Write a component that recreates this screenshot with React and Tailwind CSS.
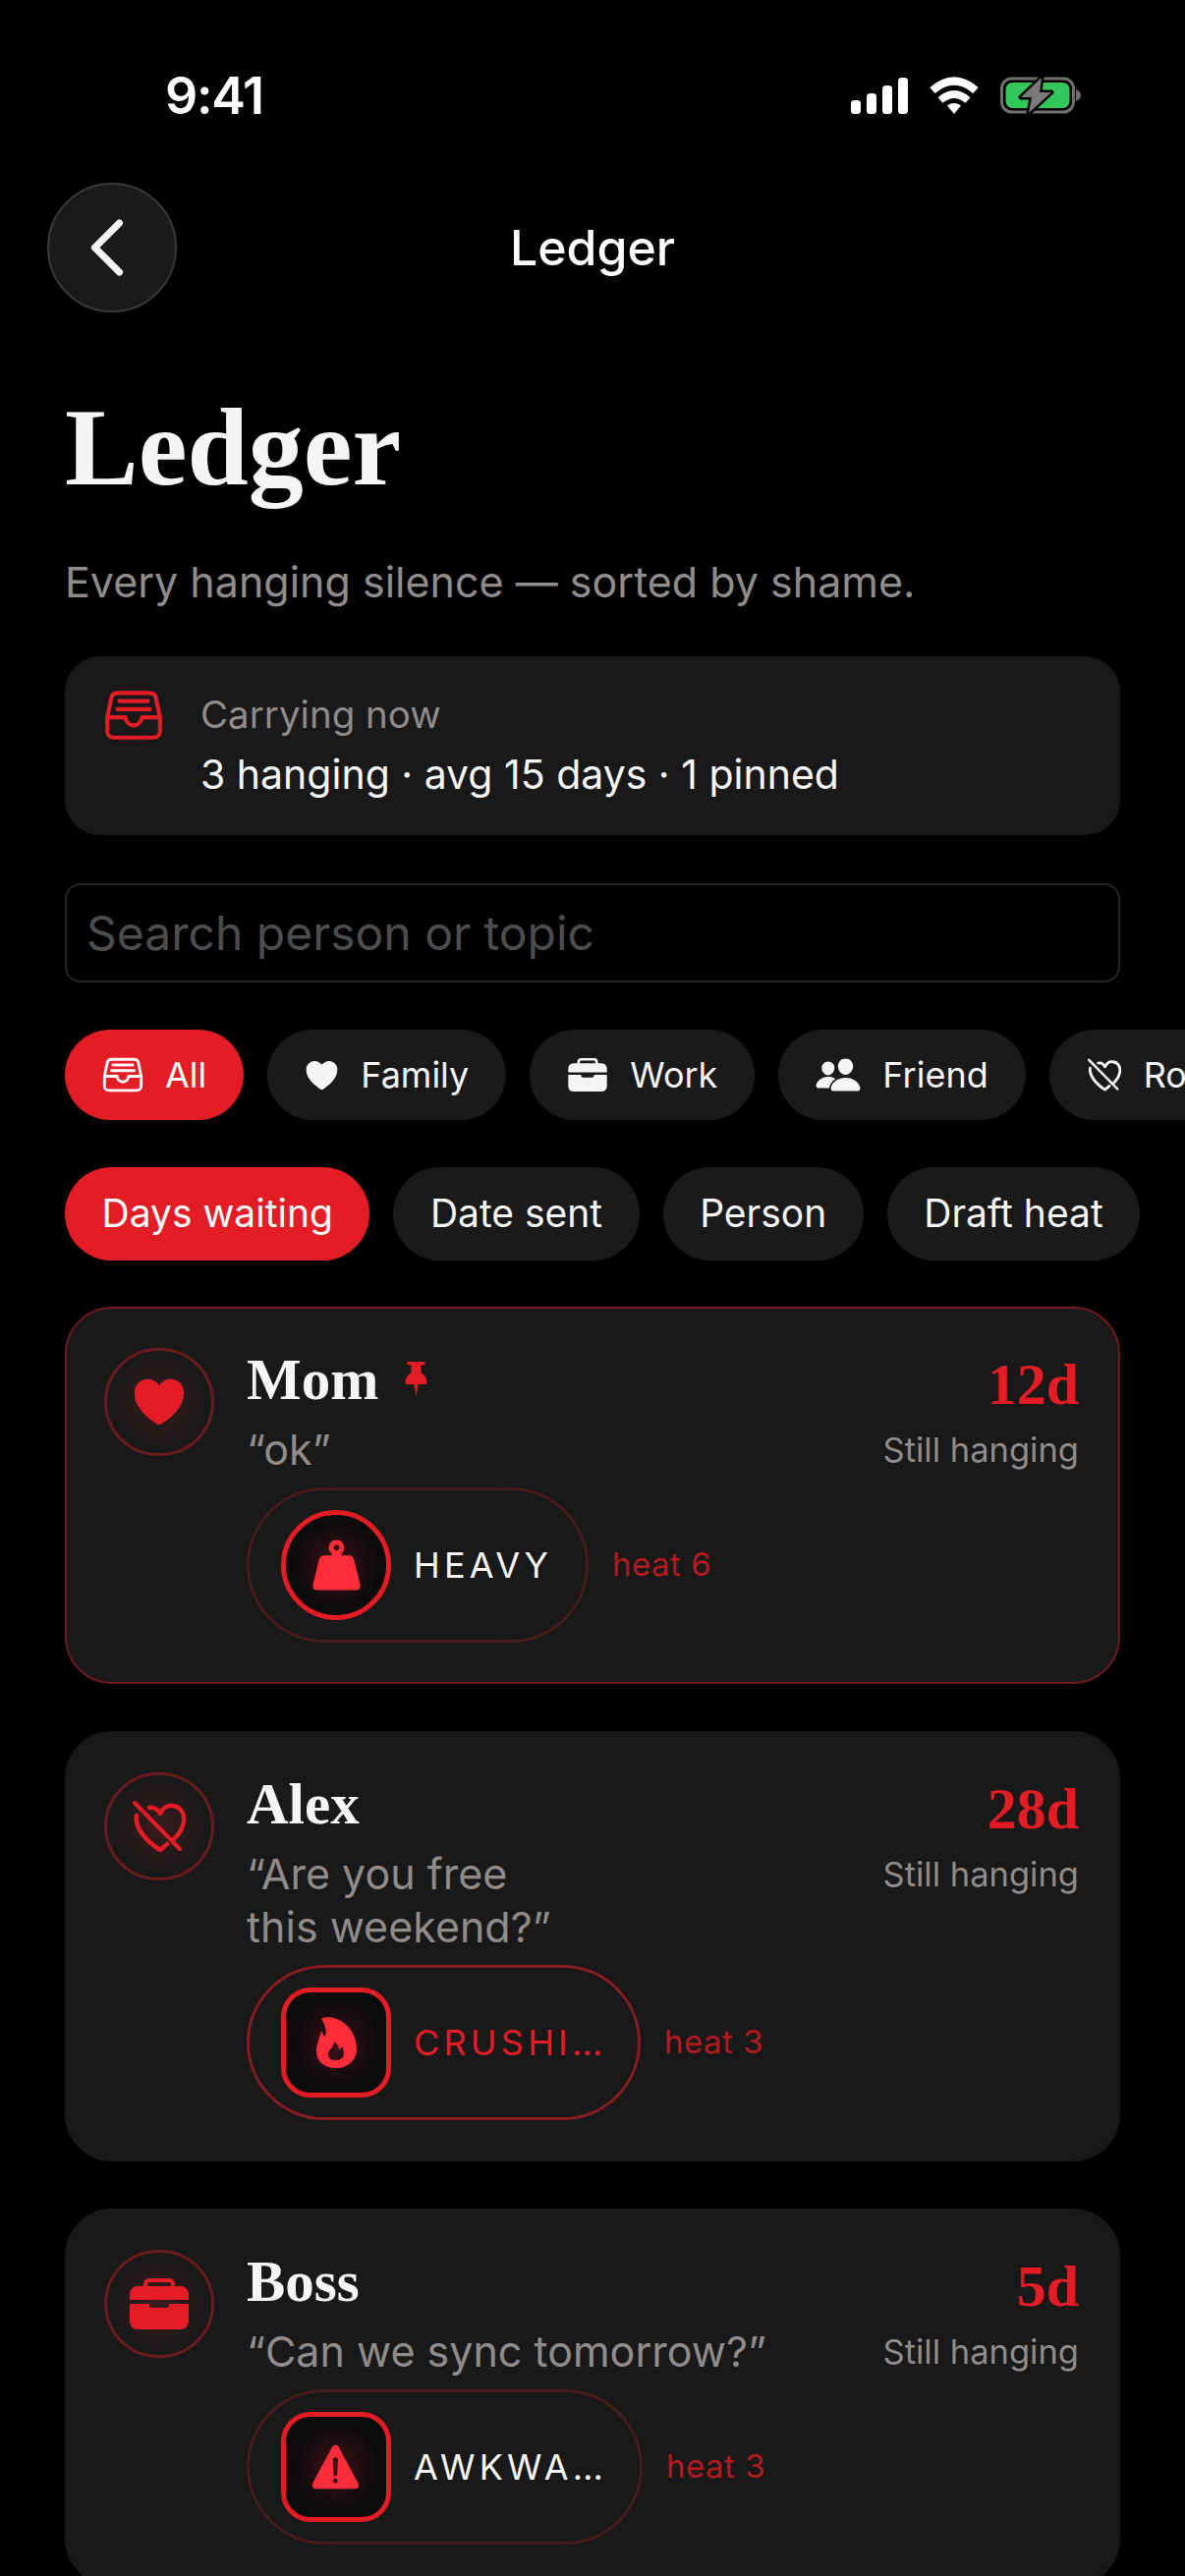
import { ChevronLeft } from 'lucide-react'
import { IoFileTrayFullOutline, IoHeart, IoBriefcase, IoPeople, IoWarning } from 'react-icons/io5'

function PinFill({ className }) {
  return (
    <svg className={className} viewBox="0 0 22 38" fill="currentColor">
      <path d="M3 1 H19 Q20.5 1 20.5 2.5 Q20.5 4 16 5 V12 Q22 16 22 22 Q22 24 20 24 H13 L11 37 L9 24 H2 Q0 24 0 22 Q0 16 6 12 V5 Q1.5 4 1.5 2.5 Q1.5 1 3 1 Z" />
    </svg>
  )
}

function WeightFill({ className }) {
  return (
    <svg className={className} viewBox="0 0 50 52" fill="currentColor">
      <path fillRule="evenodd" d="M25 0 a8 8 0 0 1 5 14.2 L30 16 H38 Q42 16 43 20 L49.5 46 Q50.5 52 45 52 H5 Q-0.5 52 0.5 46 L7 20 Q8 16 12 16 H20 L20 14.2 A8 8 0 0 1 25 0 Z M25 5 a3 3 0 1 0 0.01 0 Z" />
    </svg>
  )
}

function BrokenHeart({ className }) {
  return (
    <svg className={className} viewBox="0 0 54 52" fill="none" stroke="currentColor" strokeWidth="4.5" strokeLinecap="round" strokeLinejoin="round">
      <path d="M17 7 C22 6 26 9 28 13 C31 7 36 4 41 5 C49 6 53 13 52 21 C51 28 47 34 42 39" />
      <path d="M4 15 C2 26 12 40 28 50 L35 44" />
      <path d="M2 2 L48 49" strokeWidth="4" />
    </svg>
  )
}

function FlameFill({ className }) {
  return (
    <svg className={className} viewBox="0 0 41 52" fill="currentColor">
      <path fillRule="evenodd" d="M5 2 C10 -1 20 0 28 6 C36 12 41 22 41 33 C41 44 32 52 20 52 C8 52 0 45 0 35 C0 28 3 22 5 14 C6 17 7 19 9 20 C11 14 9 7 5 2 Z M18 25 C18 31 12 33 12 38 C12 42 15 44 20 44 C25 44 28 41 28 37 C28 34 27 32 26 30 C25 32 24 33 23 33 C23 30 21 27 18 25 Z" />
    </svg>
  )
}

function StatusBar() {
  return (
    <div className="h-[118px] pt-[72px] pl-[168px] pr-[106px] flex items-start justify-between">
      <span className="text-[52px] leading-[52px] font-semibold text-white tracking-tight">9:41</span>
      <div className="flex items-center gap-[22px] mt-[6px]">
        <svg className="w-[58px] h-[38px]" viewBox="0 0 58 38" fill="#fff">
          <rect x="0" y="24" width="10" height="14" rx="3.5" />
          <rect x="16" y="17" width="10" height="21" rx="3.5" />
          <rect x="32" y="9" width="10" height="29" rx="3.5" />
          <rect x="48" y="1" width="10" height="37" rx="3.5" />
        </svg>
        <svg className="w-[50px] h-[38px]" viewBox="0 0 50 38" fill="none" stroke="#fff">
          <path d="M3 14 Q25 -5 47 14" strokeWidth="8" />
          <path d="M11 24 Q25 12 39 24" strokeWidth="7.5" />
          <path d="M25 27 C28 27 30 28 32 29.5 L25 38 L18 29.5 C20 28 22 27 25 27 Z" fill="#fff" stroke="none" />
        </svg>
        <svg className="w-[82px] h-[38px]" viewBox="0 0 82 38">
          <rect x="1.5" y="2" width="73" height="34" rx="10" fill="none" stroke="#6f6f6f" strokeWidth="3" />
          <rect x="5.5" y="6" width="65" height="26" rx="7" fill="#34c759" />
          <path d="M77 13 Q82 15 82 19 Q82 23 77 25 Z" fill="#6f6f6f" />
          <path d="M42 1 L21 21 H32 L29 37 L52 16 H40 Z" fill="#7a7a7a" stroke="#000" strokeWidth="5" strokeLinejoin="round" paintOrder="stroke" />
        </svg>
      </div>
    </div>
  )
}

function Chip({ icon, label, active }) {
  return (
    <div className={`flex items-center gap-[23px] shrink-0 h-[92px] rounded-full pl-[39px] pr-[38px] text-[36px] ${active ? 'bg-[#e31c25] text-white' : 'bg-[#1a1a1a] text-[#f5f5f5]'}`}>
      {icon}
      <span>{label}</span>
    </div>
  )
}

function SortChip({ label, active }) {
  return (
    <div className={`flex items-center shrink-0 h-[95px] rounded-full px-[37.5px] text-[39px] ${active ? 'bg-[#e31c25] text-white' : 'bg-[#1a1a1a] text-[#f5f5f5]'}`}>
      {label}
    </div>
  )
}

function Card({ pinned, avatar, name, quote, days, badgeBox, label, labelRed, heat, badgeBorder, pillW }) {
  return (
    <div className={`rounded-[48px] bg-[#191919] pt-[40px] pb-[40px] pl-[38px] pr-[40px] border-2 ${pinned ? 'border-[#6f1a1e]' : 'border-[#191919]'}`}>
      <div className="flex">
        <div className="w-[112px] h-[110px] shrink-0 rounded-full border-[3px] border-[#6a1b1f] flex items-center justify-center text-[#e31c25] bg-[radial-gradient(circle,#3a1a1c_0%,#191919_65%)]">
          {avatar}
        </div>
        <div className="ml-[33px] flex-1 min-w-0">
          <div className="flex items-start justify-between">
            <div className="min-w-0 mt-[3px]">
              <div className="flex items-center gap-[26px]">
                <span className="font-['Liberation_Serif'] font-bold text-[59px] leading-[58px] text-[#f5f5f5]">{name}</span>
                {pinned && <PinFill className="w-[25px] h-[38px] text-[#e31c25]" />}
              </div>
              <p className="mt-[15px] text-[43px] leading-[54px] text-[#8f8c8b] w-[570px]">{quote}</p>
            </div>
            <div className="text-right shrink-0 mt-[6px]">
              <div className="font-['Liberation_Serif'] font-bold text-[60px] leading-[62px] text-[#e31c25]">{days}</div>
              <div className="mt-[14px] text-[34.5px] leading-[44px] text-[#8f8c8b]">Still hanging</div>
            </div>
          </div>
          <div className="flex items-center gap-[24px] mt-[12px]">
            <div className={`flex items-center h-[158px] rounded-full border-[3px] pl-[32px] ${badgeBorder} ${pillW}`}>
              {badgeBox}
              <span className={`ml-[23px] text-[36px] tracking-[4.2px] ${labelRed ? 'text-[#e31c25]' : 'text-[#f5f5f5]'}`}>{label}</span>
            </div>
            <span className="text-[33px] tracking-[0.5px] text-[#b51a21]">{heat}</span>
          </div>
        </div>
      </div>
    </div>
  )
}

export default function App() {
  return (
    <div className="w-[1206px] h-[2622px] bg-black font-['Inter',sans-serif] overflow-hidden">
      <StatusBar />
      <div className="relative h-[132px] mt-[68px] pl-[48px] flex items-center">
        <div className="w-[132px] h-[132px] rounded-full bg-[#1a1a1a] border-2 border-[#3a3a3a] flex items-center justify-center text-[#f5f5f5]">
          <ChevronLeft size={100} strokeWidth={1.7} className="mr-[10px] shrink-0" />
        </div>
        <div className="absolute left-0 right-0 text-center text-[50px] font-medium text-white">Ledger</div>
      </div>
      <div className="px-[66px]">
        <h1 className="mt-[77px] font-['Liberation_Serif'] font-bold text-[112px] leading-[120px] text-[#f5f5f5]">Ledger</h1>
        <p className="mt-[49px] text-[43px] leading-[56px] text-[#8f8c8b]">Every hanging silence — sorted by shame.</p>
        <div className="mt-[48px] h-[182px] rounded-[36px] bg-[#191919] flex items-start pl-[37px]">
          <IoFileTrayFullOutline size={66} className="text-[#e31c25] mt-[27px] shrink-0" />
          <div className="ml-[35px] mt-[39px]">
            <div className="text-[38.5px] leading-[40px] text-[#8f8c8b]">Carrying now</div>
            <div className="mt-[17px] text-[41px] leading-[48px] text-[#f5f5f5]">3 hanging · avg 15 days · 1 pinned</div>
          </div>
        </div>
        <div className="mt-[49px] h-[101px] rounded-[16px] border-2 border-[#262626] flex items-center pl-[20px] text-[48px] text-[#4d4d4d]">Search person or topic</div>
      </div>
      <div className="flex gap-[24px] pl-[66px] mt-[48px] overflow-hidden">
        <Chip active label="All" icon={<IoFileTrayFullOutline size={46} className="-mx-[3px] shrink-0" />} />
        <Chip label="Family" icon={<IoHeart size={39} className="-mx-[3px] shrink-0" />} />
        <Chip label="Work" icon={<IoBriefcase size={42} className="-mx-[1px] shrink-0" />} />
        <Chip label="Friend" icon={<IoPeople size={48} className="-mx-[2px] shrink-0" />} />
        <Chip label="Romantic" icon={<BrokenHeart className="w-[34px] h-[34px] shrink-0" />} />
      </div>
      <div className="flex gap-[24px] pl-[66px] mt-[48px]">
        <SortChip active label="Days waiting" />
        <SortChip label="Date sent" />
        <SortChip label="Person" />
        <SortChip label="Draft heat" />
      </div>
      <div className="flex flex-col gap-[48px] px-[66px] mt-[47px]">
        <Card
          pinned
          name="Mom"
          quote="“ok”"
          days="12d"
          label="HEAVY"
          heat="heat 6"
          badgeBorder="border-[#4a1c1f]"
          pillW="w-[348px]"
          avatar={<IoHeart size={62} />}
          badgeBox={
            <div className="w-[112px] h-[112px] shrink-0 rounded-full border-[5px] border-[#e31c25] bg-[radial-gradient(circle,#40101a_0%,#0b0b0b_62%)] flex items-center justify-center text-[#ff2d3a]">
              <WeightFill className="w-[49px] h-[52px]" />
            </div>
          }
        />
        <Card
          name="Alex"
          quote={<>“Are you free<br />this weekend?”</>}
          days="28d"
          label="CRUSHI…"
          labelRed
          heat="heat 3"
          badgeBorder="border-[#8a1c22]"
          pillW="w-[401px]"
          avatar={<BrokenHeart className="w-[54px] h-[52px]" />}
          badgeBox={
            <div className="w-[112px] h-[112px] shrink-0 rounded-[30px] border-[5px] border-[#e31c25] bg-[radial-gradient(circle,#40101a_0%,#0b0b0b_62%)] flex items-center justify-center text-[#ff2d3a]">
              <FlameFill className="w-[41px] h-[52px]" />
            </div>
          }
        />
        <Card
          name="Boss"
          quote="“Can we sync tomorrow?”"
          days="5d"
          label="AWKWA…"
          heat="heat 3"
          badgeBorder="border-[#4a1c1f]"
          pillW="w-[403px]"
          avatar={<IoBriefcase size={64} />}
          badgeBox={
            <div className="w-[112px] h-[112px] shrink-0 rounded-[30px] border-[5px] border-[#e31c25] bg-[radial-gradient(circle,#40101a_0%,#0b0b0b_62%)] flex items-center justify-center text-[#ff2d3a]">
              <IoWarning size={60} />
            </div>
          }
        />
      </div>
    </div>
  )
}
